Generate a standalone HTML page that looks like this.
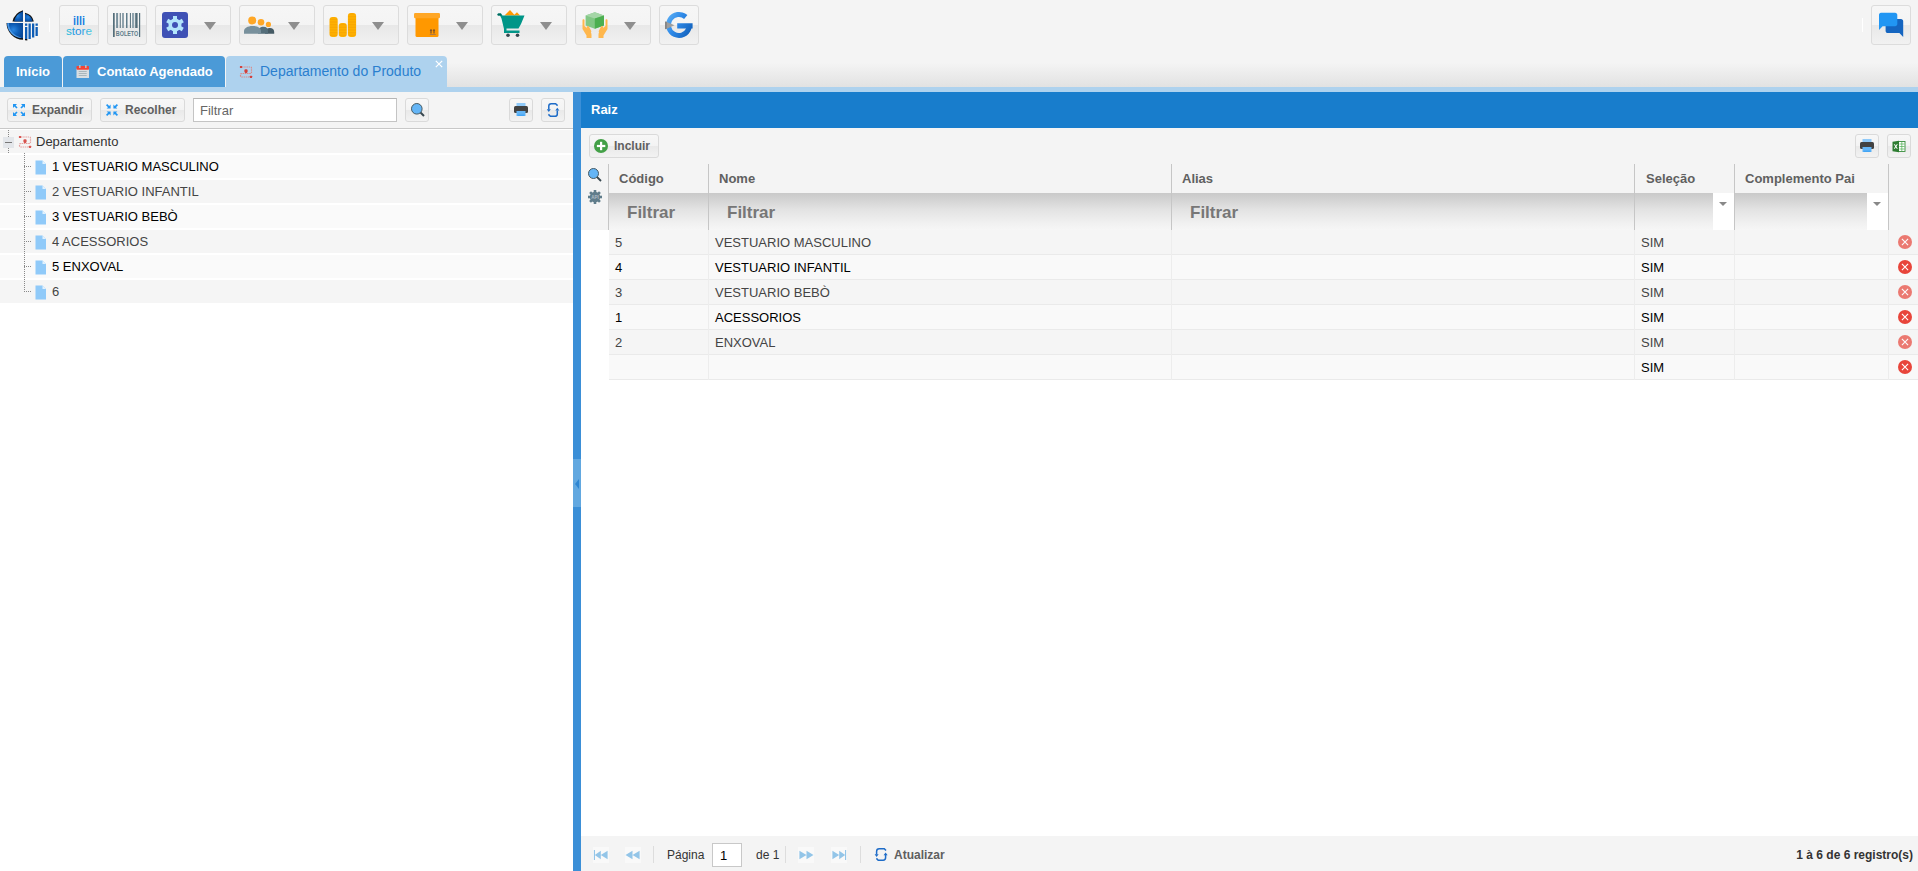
<!DOCTYPE html>
<html><head><meta charset="utf-8">
<style>
*{box-sizing:border-box;margin:0;padding:0}
html,body{width:1918px;height:871px;overflow:hidden;background:#f4f4f4;font-family:"Liberation Sans",sans-serif;font-size:13px;color:#333}
.abs{position:absolute}
.tbtn{position:absolute;top:5px;height:40px;border:1px solid #dcdcdc;border-radius:3px;background:linear-gradient(#f6f6f6 0,#f4f4f4 50%,#e8e8e8 51%,#f1f1f1 100%)}
.caret{position:absolute;top:22px;width:0;height:0;border-left:6.5px solid transparent;border-right:6.5px solid transparent;border-top:8px solid #8e8e8e}
.tab{position:absolute;top:56px;height:31px;border-radius:4px 4px 0 0;background:#4b9ad7;color:#fff;font-weight:bold;font-size:13px;line-height:31px}
.sbtn{position:absolute;height:24px;border:1px solid #dadada;border-radius:3px;background:linear-gradient(#f7f7f7 0,#f3f3f3 50%,#e9e9e9 51%,#f2f2f2 100%);font-weight:bold;color:#5f5f5f;font-size:12px;line-height:23px}
.trow{position:absolute;left:0;width:573px;height:23px;line-height:23px;font-size:13px}
.grow{position:absolute;left:609px;width:1309px;height:25px;line-height:25px;font-size:13px}
</style></head>
<body>
<!-- top toolbar -->

<!-- logo -->
<svg class="abs" style="left:4px;top:6px" width="40" height="38" viewBox="0 0 40 38">
 <defs>
  <radialGradient id="lg" cx="0.4" cy="0.45" r="0.6"><stop offset="0" stop-color="#2a86e0"/><stop offset="0.6" stop-color="#0d5cb5"/><stop offset="1" stop-color="#0a4a99"/></radialGradient>
 </defs>
 <path d="M19 4.2 A16 15 0 0 0 8.5 15.5 L19 15.5 Z" fill="#111"/>
 <path d="M19 5.2 A14.5 14 0 0 0 10 15.5 L19 15.5 Z" fill="url(#lg)"/>
 <path d="M21 6.8 A12 11 0 0 1 29.8 15.5 L21 15.5 Z" fill="#111"/>
 <path d="M21 7.8 A10.5 10 0 0 1 28.6 15.5 L21 15.5 Z" fill="url(#lg)"/>
 <path d="M2.5 17 L19 17 L19 33.8 A17 17 0 0 1 2.5 17 Z" fill="#111"/>
 <path d="M3 17 L19 17 L19 32.2 A16 15.5 0 0 1 3 17 Z" fill="url(#lg)"/>
 <path d="M3.2 17.2 L5 17.2 A15 14 0 0 0 17 31.4 L17 32 A15.5 15 0 0 1 3.2 17.2Z" fill="#5aa6f0" opacity="0.8"/>
 <rect x="21" y="21" width="2.3" height="12" fill="#0d5cb5"/><rect x="21" y="17.5" width="2.3" height="2.3" fill="#0d5cb5"/>
 <rect x="24.5" y="17.5" width="2.3" height="15.5" fill="#0d5cb5"/>
 <rect x="28" y="17.5" width="2.3" height="14" fill="#0d5cb5"/>
 <rect x="31.5" y="21" width="2.3" height="9" fill="#0d5cb5"/><rect x="31.5" y="17.5" width="2.3" height="2.3" fill="#0d5cb5"/>
 <path d="M21 33 L23.3 33 L23.3 34.5 L21 34.2Z" fill="#111"/>
</svg>
<div class="abs" style="left:49px;top:18px;width:1px;height:14px;background:#fff"></div>

<!-- illi store -->
<div class="tbtn" style="left:59px;width:40px"></div>
<svg class="abs" style="left:64px;top:14px" width="30" height="24" viewBox="0 0 30 24">
 <defs><linearGradient id="sg" x1="0" y1="0" x2="1" y2="0"><stop offset="0" stop-color="#26c6da"/><stop offset="0.45" stop-color="#1e88e5"/><stop offset="1" stop-color="#4dd0e1"/></linearGradient></defs>
 <text x="9" y="11" textLength="12" lengthAdjust="spacingAndGlyphs" font-family="Liberation Sans" font-weight="bold" font-size="12.5" fill="#1a7fe0">illi</text>
 <text x="2" y="21" textLength="26" lengthAdjust="spacingAndGlyphs" font-family="Liberation Sans" font-size="10.5" fill="url(#sg)">store</text>
</svg>

<!-- boleto -->
<div class="tbtn" style="left:107px;width:40px"></div>
<svg class="abs" style="left:113px;top:13px" width="28" height="24" viewBox="0 0 28 24">
 <rect x="0" y="0" width="1.7" height="24" fill="#546e7a"/>
 <rect x="3.1" y="0" width="2" height="15" fill="#78909c"/>
 <rect x="6.75" y="0" width="1" height="15" fill="#546e7a"/>
 <rect x="9.2" y="0" width="1.6" height="15" fill="#78909c"/>
 <rect x="13" y="0" width="1.5" height="15" fill="#607d8b"/>
 <rect x="16.9" y="0" width="1" height="15" fill="#546e7a"/>
 <rect x="19" y="0" width="2.2" height="15" fill="#90a4ae"/>
 <rect x="22.2" y="0" width="2.4" height="15" fill="#546e7a"/>
 <rect x="26" y="0" width="1.2" height="24" fill="#546e7a"/>
 <text x="2.8" y="23" textLength="22.5" lengthAdjust="spacingAndGlyphs" font-family="Liberation Sans" font-weight="bold" font-size="6.8" fill="#607d8b">BOLETO</text>
</svg>

<!-- gear dropdown -->
<div class="tbtn" style="left:155px;width:76px"></div>
<svg class="abs" style="left:162px;top:12px" width="26" height="26" viewBox="0 0 26 26">
 <rect x="0" y="0" width="26" height="26" rx="3" fill="#3f51b5"/>
 <g transform="translate(13 13)" fill="#b3e5fc">
  <circle r="6.5"/>
  <rect x="-2" y="-9" width="4" height="18"/>
  <rect x="-2" y="-9" width="4" height="18" transform="rotate(60)"/>
  <rect x="-2" y="-9" width="4" height="18" transform="rotate(120)"/>
 </g>
 <circle cx="13" cy="13" r="3" fill="#3f51b5"/>
</svg>
<div class="caret" style="left:204px"></div>

<!-- people -->
<div class="tbtn" style="left:239px;width:76px"></div>
<svg class="abs" style="left:243px;top:15px" width="34" height="20" viewBox="0 0 34 20">
 <circle cx="9.2" cy="5.4" r="4" fill="#ffa726"/>
 <circle cx="18" cy="7.2" r="3.3" fill="#ffa726"/>
 <circle cx="25.4" cy="9.4" r="2.6" fill="#ffa726"/>
 <path d="M22 18.7 V17 C22 14.5 24.5 13.1 27 13.1 C29.5 13.1 31.2 14.5 31.2 17 V18.7Z" fill="#455a64"/>
 <path d="M15 18.7 V16 C15 13.5 17.5 11.8 20.5 11.8 C23.5 11.8 25 13.5 25 16 V18.7Z" fill="#546e7a"/>
 <path d="M1 18.7 V16 C1 13 4.5 10.9 9.5 10.9 C14.5 10.9 18 13 18 16 V18.7Z" fill="#78909c"/>
</svg>
<div class="caret" style="left:288px"></div>

<!-- coins -->
<div class="tbtn" style="left:323px;width:76px"></div>
<svg class="abs" style="left:329px;top:12px" width="28" height="26" viewBox="0 0 28 26">
 <defs><pattern id="cp" width="4" height="1.6" patternUnits="userSpaceOnUse"><rect width="4" height="1.6" fill="#ffb300"/><rect y="1.1" width="4" height="0.5" fill="#f59d00"/></pattern></defs>
 <rect x="0.5" y="5" width="8.2" height="20" rx="3" fill="url(#cp)"/>
 <rect x="9.8" y="11" width="8" height="14" rx="3" fill="url(#cp)"/>
 <rect x="18.9" y="1" width="8.2" height="24" rx="3" fill="url(#cp)"/>
</svg>
<div class="caret" style="left:372px"></div>

<!-- box -->
<div class="tbtn" style="left:407px;width:76px"></div>
<svg class="abs" style="left:414px;top:13px" width="26" height="24" viewBox="0 0 26 24">
 <rect x="1.5" y="4" width="23" height="20" rx="1.5" fill="#ff9800"/>
 <rect x="0" y="0" width="26" height="5.2" rx="1.2" fill="#ffa726"/>
 <path d="M16.5 20.5 v-3 h-0.8 l1.3-1.5 1.3 1.5 h-0.8 v3z M19.5 20.5 v-3 h-0.8 l1.3-1.5 1.3 1.5 h-0.8 v3z" fill="#5d4037"/>
 <rect x="15.8" y="21" width="6" height="0.7" fill="#8d6e63"/>
</svg>
<div class="caret" style="left:456px"></div>

<!-- cart -->
<div class="tbtn" style="left:491px;width:76px"></div>
<svg class="abs" style="left:496px;top:9px" width="30" height="29" viewBox="0 0 30 29">
 <path d="M8.5 6.6 L14 1 L19 6.6Z" fill="#ff9800"/><path d="M17.5 6.6 L21 3.2 L24 6.6Z" fill="#ff9800"/>
 <path d="M1.5 5.5 C1.5 4.7 2.2 4.5 3 4.5 L5 4.5 L6.5 6.5 L28.5 6.5 L25 15 L22.5 19.5 L10.5 19.5 L10.5 21.5 L23.5 21.5 L23.5 24 L8 24 L8 20 L5.5 9.5 L4 6.5 L2.5 6.5 C1.8 6.5 1.5 6.2 1.5 5.5Z" fill="#009688"/>
 <path d="M1.5 5.5 C1.5 4.7 2.2 4.5 3 4.5 L5 4.5 L5.5 6.5 L2.5 6.5 C1.8 6.5 1.5 6.2 1.5 5.5Z" fill="#00695c"/>
 <circle cx="12" cy="26.2" r="1.8" fill="#37474f"/>
 <circle cx="21.5" cy="26.2" r="1.8" fill="#37474f"/>
</svg>
<div class="caret" style="left:540px"></div>

<!-- hands cube -->
<div class="tbtn" style="left:575px;width:76px"></div>
<svg class="abs" style="left:581px;top:11px" width="28" height="28" viewBox="0 0 28 28">
 <path d="M13.8 1.2 L23 4.5 L23 14.5 L13.8 17.8 L4.6 14.5 L4.6 4.5Z" fill="#81c784"/>
 <path d="M13.8 1.2 L23 4.5 L13.8 7.5 L4.6 4.5Z" fill="#a5d6a7"/>
 <path d="M13.8 7.5 L23 4.5 L23 14.5 L13.8 17.8Z" fill="#4caf50"/>
 <path d="M1.5 9 C1.5 8 3.5 8 3.5 9 L3.5 15 L8.5 19.5 C10 21 10.5 22 10.5 24 L10.5 27 L5.5 27 L5.5 24.5 L1.5 18Z" fill="#ffb74d"/>
 <path d="M26.5 9 C26.5 8 24.5 8 24.5 9 L24.5 15 L19.5 19.5 C18 21 17.5 22 17.5 24 L17.5 27 L22.5 27 L22.5 24.5 L26.5 18Z" fill="#ffb74d"/>
 <rect x="5.3" y="15.2" width="2.6" height="7" rx="1.3" transform="rotate(-28 6.6 15.8)" fill="#ffb74d"/>
 <rect x="20.1" y="15.2" width="2.6" height="7" rx="1.3" transform="rotate(28 21.4 15.8)" fill="#ffb74d"/>
</svg>
<div class="caret" style="left:624px"></div>

<!-- G refresh -->
<div class="tbtn" style="left:659px;width:40px"></div>
<svg class="abs" style="left:664px;top:11px" width="30" height="28" viewBox="0 0 30 28">
 <defs><linearGradient id="gg" x1="0" y1="0" x2="1" y2="0.6"><stop offset="0" stop-color="#64b5f6"/><stop offset="0.5" stop-color="#2f8ae8"/><stop offset="1" stop-color="#1565c0"/></linearGradient></defs>
 <path d="M23.4 4.0 A13 13 0 1 0 27.5 17.6 L28.6 17.6 L28.6 12.2 L13.2 12.2 L13.2 17.6 L22.1 17.6 A8 8 0 1 1 20.1 7.9 Z" fill="url(#gg)"/>
 <path d="M1.5 10.5 L10.5 14.3 L1.5 18.2Z" fill="#9e9e9e"/>
 <rect x="1.2" y="10.6" width="1.3" height="7.5" fill="#757575"/>
</svg>

<!-- chat -->
<div class="abs" style="left:1862px;top:18px;width:1px;height:14px;background:#fff"></div>
<div class="tbtn" style="left:1871px;width:40px"></div>
<svg class="abs" style="left:1878px;top:12px" width="28" height="26" viewBox="0 0 28 26">
 <path d="M7.6 9 C7.6 7.8 8.6 7 9.8 7 L23 7 C24.2 7 25.2 8 25.2 9.2 L25.2 24.9 L21.4 21.1 L9.8 21.1 C8.6 21.1 7.6 20.1 7.6 18.9Z" fill="#1565c0"/>
 <path d="M3 0.8 C1.8 0.8 1 1.8 1 3 L1 18 L4.6 14.2 L17.1 14.2 C18.3 14.2 19.3 13.3 19.3 12 L19.3 3 C19.3 1.8 18.3 0.8 17.1 0.8Z" fill="#2196f3"/>
</svg>

<!-- tabs -->
<div class="abs" style="left:447px;top:56px;width:1471px;height:31px;background:linear-gradient(#f4f4f4 0,#f4f4f4 22%,#e2e2e2 100%)"></div>
<div class="abs" style="left:0;top:87px;width:1918px;height:5px;background:#aed2ee"></div>
<div class="tab" style="left:4px;width:58px;padding-left:12px">Início</div>
<div class="tab" style="left:63px;width:162px;padding-left:34px">Contato Agendado</div>
<div class="tab" style="left:226px;width:221px;padding-left:34px;background:#aed2ee;color:#2a7fcf;font-weight:normal;font-size:14px">Departamento do Produto</div>

<!-- left panel -->
<div class="abs" style="left:0;top:92px;width:573px;height:37px;background:#f4f4f4;border-bottom:1px solid #c8c8c8"></div>
<div class="abs" style="left:0;top:129px;width:573px;height:742px;background:#fff"></div>

<!-- splitter -->
<div class="abs" style="left:573px;top:92px;width:8px;height:779px;background:#3b8fd7"></div>
<div class="abs" style="left:573px;top:459px;width:8px;height:48px;background:#62a8e0"></div>
<div class="abs" style="left:575px;top:478.5px;width:0;height:0;border-top:5px solid transparent;border-bottom:5px solid transparent;border-right:4px solid #2f86d2"></div>

<!-- right panel -->
<div class="abs" style="left:581px;top:92px;width:1337px;height:36px;background:#187dcc;color:#fff;font-weight:bold;font-size:13px;line-height:36px;padding-left:10px">Raiz</div>
<div class="abs" style="left:581px;top:128px;width:1337px;height:102px;background:#f4f4f4"></div>
<div class="abs" style="left:581px;top:230px;width:1337px;height:606px;background:#fff"></div>
<div class="abs" style="left:581px;top:836px;width:1337px;height:35px;background:#f4f4f4"></div>


<svg class="abs" style="left:76px;top:65px" width="14" height="14" viewBox="0 0 14 14">
 <rect x="0.5" y="3.5" width="12.5" height="9.5" fill="#d9dee1"/>
 <rect x="0.5" y="1" width="12.5" height="3.8" rx="0.8" fill="#f44336"/>
 <rect x="3" y="0" width="1.6" height="3" fill="#b0bec5"/>
 <rect x="9" y="0" width="1.6" height="3" fill="#b0bec5"/>
 <rect x="2.7" y="6" width="8" height="0.9" fill="#a3b1b8"/>
 <rect x="2.7" y="8" width="8" height="0.9" fill="#a3b1b8"/>
 <rect x="2.7" y="10" width="8" height="0.9" fill="#a3b1b8"/>
</svg>
<svg class="abs" style="left:237px;top:63px" width="18" height="18" viewBox="0 0 18 18">
 <path d="M5 4 H13.3 Q14.5 4 14.5 5.2 V9.3 Q14.5 10.5 13.3 10.5 H4.7 Q3.5 10.5 3.5 11.7 V12.8 Q3.5 14 4.7 14 H13" fill="none" stroke="#d98b8a" stroke-width="1.2" stroke-dasharray="1.5 0.7"/>
 <rect x="2.9" y="2.9" width="2.2" height="2.2" rx="0.4" fill="#d33f3b"/>
 <rect x="12.9" y="12.8" width="2.2" height="2.2" rx="0.4" fill="#d33f3b"/>
 <ellipse cx="9" cy="8.2" rx="1.5" ry="2" fill="#d33f3b"/>
 <ellipse cx="9" cy="7.2" rx="1.9" ry="1" fill="#d33f3b" opacity="0.6"/>
</svg>
<svg class="abs" style="left:435px;top:60px" width="8" height="8" viewBox="0 0 8 8"><path d="M0.8 0.8 L7.2 7.2 M7.2 0.8 L0.8 7.2" stroke="#fff" stroke-width="1.2"/></svg>

<div class="sbtn" style="left:7px;top:98px;width:85px;padding-left:24px">Expandir</div>
<svg class="abs" style="left:12px;top:103px" width="14" height="14" viewBox="0 0 14 14" fill="#2196f3">
 <path d="M1 1 H5 L3.6 2.4 L5.6 4.4 L4.4 5.6 L2.4 3.6 L1 5Z"/>
 <path d="M13 1 V5 L11.6 3.6 L9.6 5.6 L8.4 4.4 L10.4 2.4 L9 1Z"/>
 <path d="M1 13 V9 L2.4 10.4 L4.4 8.4 L5.6 9.6 L3.6 11.6 L5 13Z"/>
 <path d="M13 13 H9 L10.4 11.6 L8.4 9.6 L9.6 8.4 L11.6 10.4 L13 9Z"/>
</svg>
<div class="sbtn" style="left:100px;top:98px;width:85px;padding-left:24px">Recolher</div>
<svg class="abs" style="left:105px;top:103px" width="14" height="14" viewBox="0 0 14 14" fill="#2196f3">
 <path d="M5.6 5.6 H1.6 L3 4.2 L1 2.2 L2.2 1 L4.2 3 L5.6 1.6Z"/>
 <path d="M8.4 5.6 V1.6 L9.8 3 L11.8 1 L13 2.2 L11 4.2 L12.4 5.6Z"/>
 <path d="M5.6 8.4 V12.4 L4.2 11 L2.2 13 L1 11.8 L3 9.8 L1.6 8.4Z"/>
 <path d="M8.4 8.4 H12.4 L11 9.8 L13 11.8 L11.8 13 L9.8 11 L8.4 12.4Z"/>
</svg>
<div class="abs" style="left:193px;top:98px;width:204px;height:24px;background:#fff;border:1px solid #c4c4c4;border-top-color:#b5b5b5;font-size:13px;line-height:23px;padding-left:6px;color:#666">Filtrar</div>
<div class="sbtn" style="left:405px;top:98px;width:24px"></div>
<svg class="abs" style="left:410px;top:102px" width="16" height="16" viewBox="0 0 16 16">
 <line x1="10" y1="10" x2="14" y2="14" stroke="#37474f" stroke-width="2"/>
 <circle cx="6.8" cy="6.8" r="5.3" fill="#64b5f6" stroke="#455a64" stroke-width="1"/>
</svg>
<div class="sbtn" style="left:509px;top:98px;width:24px"></div>
<svg class="abs" style="left:513px;top:103px" width="16" height="14" viewBox="0 0 16 14">
 <rect x="3.5" y="0" width="9" height="3.5" fill="#90caf9"/>
 <rect x="1" y="3" width="14" height="7" rx="1.5" fill="#424242"/>
 <rect x="3.5" y="8" width="9" height="5" fill="#64b5f6"/>
 <rect x="4.5" y="11.5" width="7" height="1.5" fill="#42a5f5"/>
</svg>
<div class="sbtn" style="left:541px;top:98px;width:24px"></div>
<svg class="abs" style="left:540px;top:97px" width="26" height="26" viewBox="0 0 26 26">
 <path d="M17.6 8.6 L15.6 6.7 H11.2 Q8.8 6.7 8.8 9.1 V12.6" fill="none" stroke="#1e6cc8" stroke-width="1.5"/>
 <path d="M8.4 17.4 L10.4 19.3 H14.8 Q17.3 19.3 17.3 16.9 V13.5" fill="none" stroke="#1e6cc8" stroke-width="1.5"/>
 <path d="M6.8 12.2 H10.8 L8.8 15Z" fill="#1e6cc8"/>
 <path d="M15.3 13.6 H19.3 L17.3 10.8Z" fill="#1e6cc8"/>
</svg>

<!-- tree -->
<div class="trow" style="top:130px;background:#f5f5f5;color:#333"><span style="position:absolute;left:36px">Departamento</span></div>
<div class="abs" style="left:8px;top:130px;width:0;height:23px;border-left:1px dotted #888"></div>
<div class="abs" style="left:3px;top:137px;width:11px;height:11px;background:#e3e6ea"></div>
<div class="abs" style="left:5px;top:142px;width:7px;height:1px;background:#777"></div>
<svg class="abs" style="left:16px;top:133px" width="18" height="18" viewBox="0 0 18 18">
 <path d="M5 4 H13.3 Q14.5 4 14.5 5.2 V9.3 Q14.5 10.5 13.3 10.5 H4.7 Q3.5 10.5 3.5 11.7 V12.8 Q3.5 14 4.7 14 H13" fill="none" stroke="#e5a19f" stroke-width="1.2" stroke-dasharray="1.5 0.7"/>
 <rect x="2.9" y="2.9" width="2.2" height="2.2" rx="0.4" fill="#d9534f"/>
 <rect x="12.9" y="12.8" width="2.2" height="2.2" rx="0.4" fill="#d9534f"/>
 <ellipse cx="9" cy="8.2" rx="1.5" ry="2" fill="#d9534f"/>
 <ellipse cx="9" cy="7.2" rx="1.9" ry="1" fill="#d9534f" opacity="0.6"/>
</svg>
<div class="trow" style="top:155px;background:#fafafa;color:#000"><span style="position:absolute;left:52px">1 VESTUARIO MASCULINO</span></div>
<div class="abs" style="left:24px;top:166px;width:7px;height:0;border-top:1px dotted #888"></div>
<svg class="abs" style="left:35px;top:160px" width="12" height="15" viewBox="0 0 12 15"><path d="M0.5 0.5 H7.5 L11 4 V14.5 H0.5Z" fill="#90caf9"/><path d="M7.5 0.5 V4 H11Z" fill="#e3f2fd"/></svg>
<div class="trow" style="top:180px;background:#f5f5f5;color:#444"><span style="position:absolute;left:52px">2 VESTUARIO INFANTIL</span></div>
<div class="abs" style="left:24px;top:191px;width:7px;height:0;border-top:1px dotted #888"></div>
<svg class="abs" style="left:35px;top:185px" width="12" height="15" viewBox="0 0 12 15"><path d="M0.5 0.5 H7.5 L11 4 V14.5 H0.5Z" fill="#90caf9"/><path d="M7.5 0.5 V4 H11Z" fill="#e3f2fd"/></svg>
<div class="trow" style="top:205px;background:#fafafa;color:#000"><span style="position:absolute;left:52px">3 VESTUARIO BEBÒ</span></div>
<div class="abs" style="left:24px;top:216px;width:7px;height:0;border-top:1px dotted #888"></div>
<svg class="abs" style="left:35px;top:210px" width="12" height="15" viewBox="0 0 12 15"><path d="M0.5 0.5 H7.5 L11 4 V14.5 H0.5Z" fill="#90caf9"/><path d="M7.5 0.5 V4 H11Z" fill="#e3f2fd"/></svg>
<div class="trow" style="top:230px;background:#f5f5f5;color:#444"><span style="position:absolute;left:52px">4 ACESSORIOS</span></div>
<div class="abs" style="left:24px;top:241px;width:7px;height:0;border-top:1px dotted #888"></div>
<svg class="abs" style="left:35px;top:235px" width="12" height="15" viewBox="0 0 12 15"><path d="M0.5 0.5 H7.5 L11 4 V14.5 H0.5Z" fill="#90caf9"/><path d="M7.5 0.5 V4 H11Z" fill="#e3f2fd"/></svg>
<div class="trow" style="top:255px;background:#fafafa;color:#000"><span style="position:absolute;left:52px">5 ENXOVAL</span></div>
<div class="abs" style="left:24px;top:266px;width:7px;height:0;border-top:1px dotted #888"></div>
<svg class="abs" style="left:35px;top:260px" width="12" height="15" viewBox="0 0 12 15"><path d="M0.5 0.5 H7.5 L11 4 V14.5 H0.5Z" fill="#90caf9"/><path d="M7.5 0.5 V4 H11Z" fill="#e3f2fd"/></svg>
<div class="trow" style="top:280px;background:#f5f5f5;color:#444"><span style="position:absolute;left:52px">6</span></div>
<div class="abs" style="left:24px;top:291px;width:7px;height:0;border-top:1px dotted #888"></div>
<svg class="abs" style="left:35px;top:285px" width="12" height="15" viewBox="0 0 12 15"><path d="M0.5 0.5 H7.5 L11 4 V14.5 H0.5Z" fill="#90caf9"/><path d="M7.5 0.5 V4 H11Z" fill="#e3f2fd"/></svg>
<div class="abs" style="left:24px;top:153px;width:0;height:139px;border-left:1px dotted #888"></div>

<div class="sbtn" style="left:589px;top:134px;width:70px;padding-left:24px">Incluir</div>
<svg class="abs" style="left:593px;top:138px" width="16" height="16" viewBox="0 0 16 16">
 <circle cx="8" cy="8" r="7" fill="#43a047"/>
 <rect x="7" y="3.8" width="2.2" height="8.4" fill="#fff"/>
 <rect x="3.9" y="6.9" width="8.4" height="2.2" fill="#fff"/>
</svg>
<div class="sbtn" style="left:1855px;top:134px;width:24px"></div>
<svg class="abs" style="left:1859px;top:139px" width="16" height="14" viewBox="0 0 16 14">
 <rect x="3.5" y="0" width="9" height="3.5" fill="#90caf9"/>
 <rect x="1" y="3" width="14" height="7" rx="1.5" fill="#424242"/>
 <rect x="3.5" y="8" width="9" height="5" fill="#64b5f6"/>
 <rect x="4.5" y="11.5" width="7" height="1.5" fill="#42a5f5"/>
</svg>
<div class="sbtn" style="left:1887px;top:134px;width:24px"></div>
<svg class="abs" style="left:1891px;top:140px" width="16" height="13" viewBox="0 0 16 13">
 <rect x="6.5" y="1.5" width="7.5" height="10" fill="#fff" stroke="#388e3c" stroke-width="0.9"/>
 <path d="M8.5 4 H13.5 M8.5 6.5 H13.5 M8.5 9 H13.5 M10.8 2 V11" stroke="#4caf50" stroke-width="0.7"/>
 <path d="M1.5 1.8 L8 0.8 V12.2 L1.5 11.2Z" fill="#2e7d32"/>
 <path d="M2.8 4.2 L3.9 4.2 L4.8 5.7 L5.7 4.2 L6.8 4.2 L5.4 6.5 L6.8 8.8 L5.7 8.8 L4.8 7.3 L3.9 8.8 L2.8 8.8 L4.2 6.5Z" fill="#fff"/>
</svg>
<!-- grid side icons -->
<svg class="abs" style="left:587px;top:167px" width="16" height="16" viewBox="0 0 16 16">
 <line x1="9.5" y1="9.5" x2="14" y2="14" stroke="#37474f" stroke-width="1.8"/>
 <circle cx="6.5" cy="6.5" r="5" fill="#64b5f6" stroke="#455a64" stroke-width="1"/>
</svg>
<svg class="abs" style="left:587px;top:189px" width="16" height="16" viewBox="0 0 16 16">
 <g transform="translate(8 8)" fill="#607d8b">
  <circle r="5.2"/>
  <rect x="-1.3" y="-7" width="2.6" height="14"/>
  <rect x="-1.3" y="-7" width="2.6" height="14" transform="rotate(45)"/>
  <rect x="-1.3" y="-7" width="2.6" height="14" transform="rotate(90)"/>
  <rect x="-1.3" y="-7" width="2.6" height="14" transform="rotate(135)"/>
 </g>
 <text x="8" y="9.8" text-anchor="middle" font-family="Liberation Sans" font-weight="bold" font-size="4.5" fill="#b0bec5">API</text>
</svg>
<!-- grid header -->
<div class="abs" style="left:608px;top:164px;width:1px;height:66px;background:#c6c6c6"></div>
<div class="abs" style="left:609px;top:193px;width:1280px;height:37px;background:linear-gradient(#c9c9c9 0,#e3e3e3 45%,#f0f0f0 80%,#f6f6f6 100%)"></div>
<div class="abs" style="left:619px;top:164px;height:29px;line-height:29px;font-weight:bold;font-size:13px;color:#606060">Código</div>
<div class="abs" style="left:719px;top:164px;height:29px;line-height:29px;font-weight:bold;font-size:13px;color:#606060">Nome</div>
<div class="abs" style="left:1182px;top:164px;height:29px;line-height:29px;font-weight:bold;font-size:13px;color:#606060">Alias</div>
<div class="abs" style="left:1646px;top:164px;height:29px;line-height:29px;font-weight:bold;font-size:13px;color:#606060">Seleção</div>
<div class="abs" style="left:1745px;top:164px;height:29px;line-height:29px;font-weight:bold;font-size:13px;color:#606060">Complemento Pai</div>
<div class="abs" style="left:708px;top:164px;width:1px;height:66px;background:#c6c6c6"></div>
<div class="abs" style="left:1171px;top:164px;width:1px;height:66px;background:#c6c6c6"></div>
<div class="abs" style="left:1634px;top:164px;width:1px;height:66px;background:#c6c6c6"></div>
<div class="abs" style="left:1734px;top:164px;width:1px;height:66px;background:#c6c6c6"></div>
<div class="abs" style="left:1888px;top:164px;width:1px;height:66px;background:#c6c6c6"></div>
<div class="abs" style="left:627px;top:194px;height:37px;line-height:37px;font-weight:bold;font-size:17px;color:#777">Filtrar</div>
<div class="abs" style="left:727px;top:194px;height:37px;line-height:37px;font-weight:bold;font-size:17px;color:#777">Filtrar</div>
<div class="abs" style="left:1190px;top:194px;height:37px;line-height:37px;font-weight:bold;font-size:17px;color:#777">Filtrar</div>
<div class="abs" style="left:1713px;top:193px;width:21px;height:37px;background:#fff"></div>
<div class="abs" style="left:1867px;top:193px;width:21px;height:37px;background:#fff"></div>
<div class="abs" style="left:1719px;top:202px;width:0;height:0;border-left:4.5px solid transparent;border-right:4.5px solid transparent;border-top:4.5px solid #888"></div>
<div class="abs" style="left:1873px;top:202px;width:0;height:0;border-left:4.5px solid transparent;border-right:4.5px solid transparent;border-top:4.5px solid #888"></div>
<div class="grow" style="top:230px;background:#f5f5f5;color:#444;border-bottom:1px solid #eaeaea"><span style="position:absolute;left:6px">5</span><span style="position:absolute;left:106px">VESTUARIO MASCULINO</span><span style="position:absolute;left:1032px">SIM</span></div>
<svg class="abs" style="left:1898px;top:235px;opacity:0.7" width="14" height="14" viewBox="0 0 14 14"><circle cx="7" cy="7" r="7" fill="#e8453a"/><path d="M3.9 3.9 L10.1 10.1 M10.1 3.9 L3.9 10.1" stroke="#fff" stroke-width="1.1"/></svg>
<div class="grow" style="top:255px;background:#f9f9f9;color:#000;border-bottom:1px solid #eaeaea"><span style="position:absolute;left:6px">4</span><span style="position:absolute;left:106px">VESTUARIO INFANTIL</span><span style="position:absolute;left:1032px">SIM</span></div>
<svg class="abs" style="left:1898px;top:260px;opacity:1" width="14" height="14" viewBox="0 0 14 14"><circle cx="7" cy="7" r="7" fill="#e8453a"/><path d="M3.9 3.9 L10.1 10.1 M10.1 3.9 L3.9 10.1" stroke="#fff" stroke-width="1.1"/></svg>
<div class="grow" style="top:280px;background:#f5f5f5;color:#444;border-bottom:1px solid #eaeaea"><span style="position:absolute;left:6px">3</span><span style="position:absolute;left:106px">VESTUARIO BEBÒ</span><span style="position:absolute;left:1032px">SIM</span></div>
<svg class="abs" style="left:1898px;top:285px;opacity:0.7" width="14" height="14" viewBox="0 0 14 14"><circle cx="7" cy="7" r="7" fill="#e8453a"/><path d="M3.9 3.9 L10.1 10.1 M10.1 3.9 L3.9 10.1" stroke="#fff" stroke-width="1.1"/></svg>
<div class="grow" style="top:305px;background:#f9f9f9;color:#000;border-bottom:1px solid #eaeaea"><span style="position:absolute;left:6px">1</span><span style="position:absolute;left:106px">ACESSORIOS</span><span style="position:absolute;left:1032px">SIM</span></div>
<svg class="abs" style="left:1898px;top:310px;opacity:1" width="14" height="14" viewBox="0 0 14 14"><circle cx="7" cy="7" r="7" fill="#e8453a"/><path d="M3.9 3.9 L10.1 10.1 M10.1 3.9 L3.9 10.1" stroke="#fff" stroke-width="1.1"/></svg>
<div class="grow" style="top:330px;background:#f5f5f5;color:#444;border-bottom:1px solid #eaeaea"><span style="position:absolute;left:6px">2</span><span style="position:absolute;left:106px">ENXOVAL</span><span style="position:absolute;left:1032px">SIM</span></div>
<svg class="abs" style="left:1898px;top:335px;opacity:0.7" width="14" height="14" viewBox="0 0 14 14"><circle cx="7" cy="7" r="7" fill="#e8453a"/><path d="M3.9 3.9 L10.1 10.1 M10.1 3.9 L3.9 10.1" stroke="#fff" stroke-width="1.1"/></svg>
<div class="grow" style="top:355px;background:#f9f9f9;color:#000;border-bottom:1px solid #eaeaea"><span style="position:absolute;left:6px"></span><span style="position:absolute;left:106px"></span><span style="position:absolute;left:1032px">SIM</span></div>
<svg class="abs" style="left:1898px;top:360px;opacity:1" width="14" height="14" viewBox="0 0 14 14"><circle cx="7" cy="7" r="7" fill="#e8453a"/><path d="M3.9 3.9 L10.1 10.1 M10.1 3.9 L3.9 10.1" stroke="#fff" stroke-width="1.1"/></svg>
<div class="abs" style="left:708px;top:230px;width:1px;height:150px;background:#ededed"></div>
<div class="abs" style="left:1171px;top:230px;width:1px;height:150px;background:#ededed"></div>
<div class="abs" style="left:1634px;top:230px;width:1px;height:150px;background:#ededed"></div>
<div class="abs" style="left:1734px;top:230px;width:1px;height:150px;background:#ededed"></div>
<div class="abs" style="left:1888px;top:230px;width:1px;height:150px;background:#ededed"></div>

<div class="abs" style="left:593px;top:847px;width:16px;height:16px;background:#f9f9f9"></div>
<svg class="abs" style="left:593px;top:847px" width="16" height="16" viewBox="0 0 16 16" fill="#93c5e8"><rect x="0.9" y="3" width="1.1" height="10"/><path d="M1.8 8 L7.8 3.8 V12.2Z M7.8 8 L14.6 3.8 V12.2Z"/></svg>
<div class="abs" style="left:625px;top:847px;width:16px;height:16px;background:#f9f9f9"></div>
<svg class="abs" style="left:625px;top:847px" width="16" height="16" viewBox="0 0 16 16" fill="#93c5e8"><path d="M0.5 8 L7.5 3.8 V12.2Z M7.5 8 L14.6 3.8 V12.2Z"/></svg>
<div class="abs" style="left:653px;top:846px;width:1px;height:17px;background:#ddd"></div>
<div class="abs" style="left:667px;top:844px;line-height:23px;font-size:12px;color:#333">Página</div>
<div class="abs" style="left:712px;top:843px;width:30px;height:24px;background:#fff;border:1px solid #c8c8c8;font-size:13px;line-height:23px;padding-left:7px;color:#000">1</div>
<div class="abs" style="left:756px;top:844px;line-height:23px;font-size:12px;color:#333">de 1</div>
<div class="abs" style="left:785px;top:846px;width:1px;height:17px;background:#ddd"></div>
<div class="abs" style="left:798px;top:847px;width:16px;height:16px;background:#f9f9f9"></div>
<svg class="abs" style="left:798px;top:847px" width="16" height="16" viewBox="0 0 16 16" fill="#93c5e8"><path d="M15.5 8 L8.5 3.8 V12.2Z M8.5 8 L1.4 3.8 V12.2Z"/></svg>
<div class="abs" style="left:831px;top:847px;width:16px;height:16px;background:#f9f9f9"></div>
<svg class="abs" style="left:831px;top:847px" width="16" height="16" viewBox="0 0 16 16" fill="#93c5e8"><rect x="14" y="3" width="1.1" height="10"/><path d="M14.2 8 L8.2 3.8 V12.2Z M8.2 8 L1.4 3.8 V12.2Z"/></svg>
<div class="abs" style="left:860px;top:846px;width:1px;height:17px;background:#ddd"></div>
<svg class="abs" style="left:873px;top:846px" width="16" height="17" viewBox="0 0 16 17">
 <path d="M13 4.6 L11.3 2.8 H6.2 Q3.6 2.8 3.6 5.4 V8.5" fill="none" stroke="#1e6cc8" stroke-width="1.5"/>
 <path d="M3.4 12.4 L5.2 14.2 H10.1 Q12.6 14.2 12.6 11.6 V9" fill="none" stroke="#1e6cc8" stroke-width="1.5"/>
 <path d="M1.6 8.2 H5.6 L3.6 11Z" fill="#1e6cc8"/>
 <path d="M10.6 9.2 H14.6 L12.6 6.4Z" fill="#1e6cc8"/>
</svg>
<div class="abs" style="left:894px;top:844px;line-height:23px;font-size:12px;font-weight:bold;color:#5f5f5f">Atualizar</div>
<div class="abs" style="left:1700px;top:844px;width:1213px;text-align:right;left:auto;right:5px;line-height:23px;font-size:12px;font-weight:bold;color:#333">1 à 6 de 6 registro(s)</div>
</body></html>
